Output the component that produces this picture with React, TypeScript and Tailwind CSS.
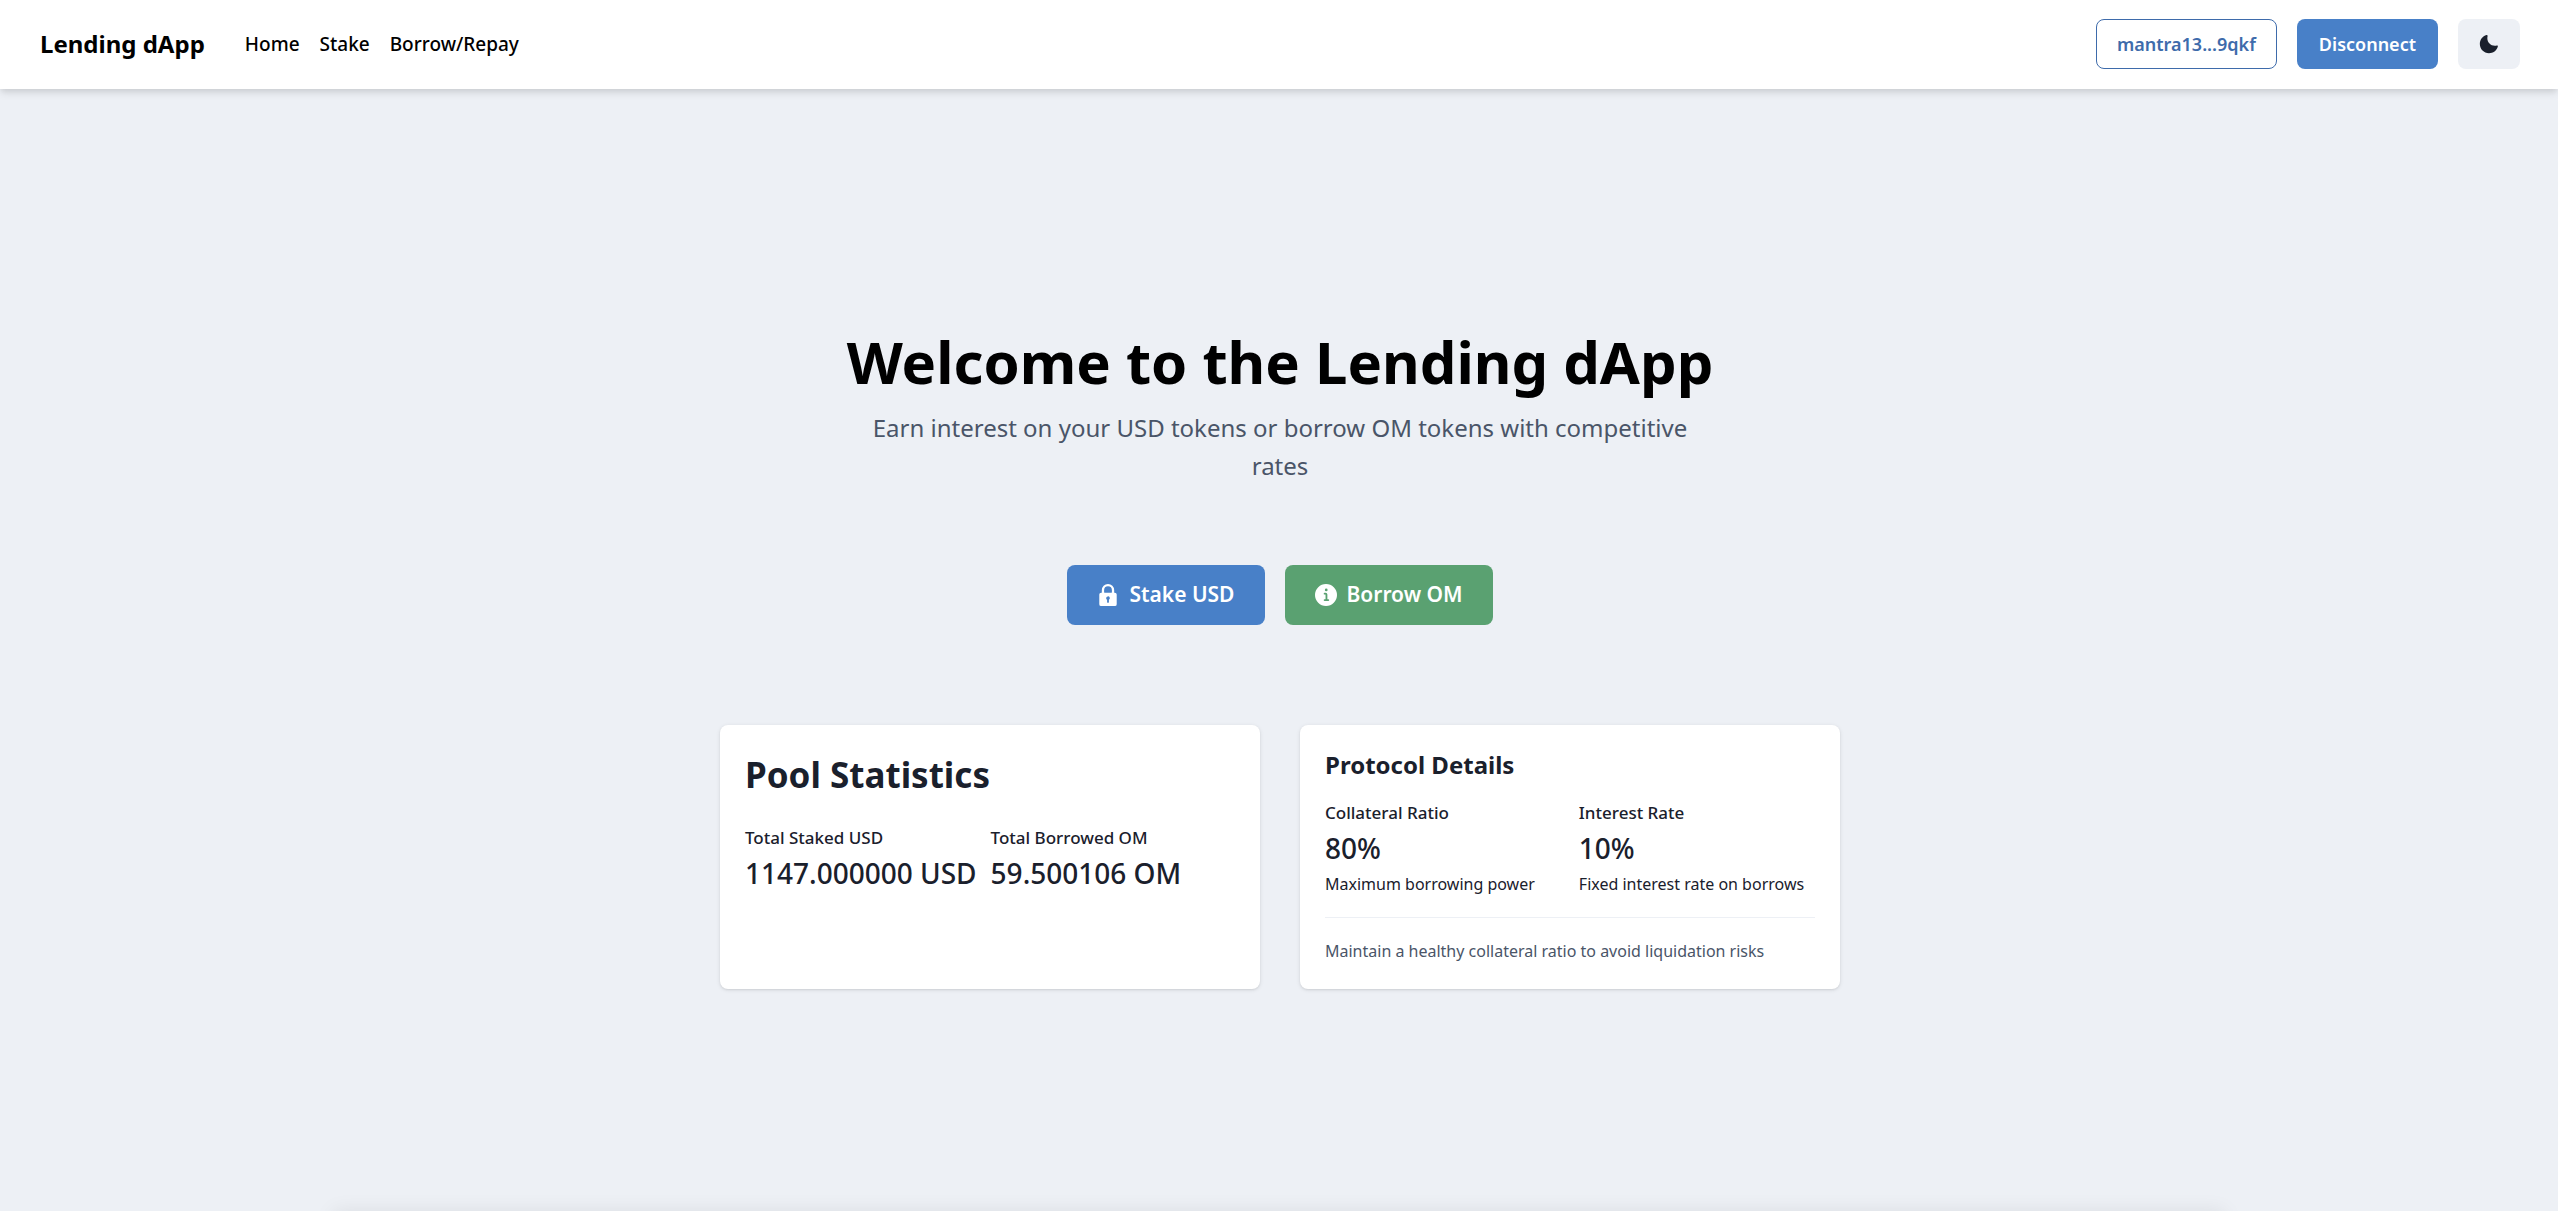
import type { ReactNode } from 'react';

const navLinks = ['Home', 'Stake', 'Borrow/Repay'];

function MoonIcon() {
  return (
    <svg viewBox="0 0 24 24" className="size-5" fill="currentColor" aria-hidden="true">
      <path d="M21.4,13.7C20.6,13.9,19.8,14,19,14c-5,0-9-4-9-9c0-0.8,0.1-1.6,0.3-2.4c0.1-0.3,0-0.7-0.3-1 c-0.3-0.3-0.6-0.4-1-0.3C4.3,2.7,1,7.1,1,12c0,6.1,4.9,11,11,11c4.9,0,9.3-3.3,10.6-8.1c0.1-0.3,0-0.7-0.3-1 C22.1,13.7,21.7,13.6,21.4,13.7z" />
    </svg>
  );
}

function LockIcon() {
  return (
    <svg viewBox="0 0 24 24" className="size-[22px]" fill="currentColor" aria-hidden="true">
      <path d="M19.5,9.5h-.75V6.75a6.75,6.75,0,0,0-13.5,0V9.5H4.5a2,2,0,0,0-2,2V22a2,2,0,0,0,2,2h15a2,2,0,0,0,2-2V11.5A2,2,0,0,0,19.5,9.5Zm-9.5,6a2,2,0,1,1,3,1.723V19.5a1,1,0,0,1-2,0V17.223A1.994,1.994,0,0,1,10,15.5ZM7.75,6.75a4.25,4.25,0,0,1,8.5,0V9a.5.5,0,0,1-.5.5H8.25a.5.5,0,0,1-.5-.5Z" />
    </svg>
  );
}

function InfoIcon() {
  return (
    <svg viewBox="0 0 24 24" className="size-[22px]" fill="currentColor" aria-hidden="true">
      <path d="M12,0A12,12,0,1,0,24,12,12.013,12.013,0,0,0,12,0Zm.25,5a1.5,1.5,0,1,1-1.5,1.5A1.5,1.5,0,0,1,12.25,5ZM14.5,18.5h-4a1,1,0,0,1,0-2h.75a.25.25,0,0,0,.25-.25v-4.5a.25.25,0,0,0-.25-.25H10.5a1,1,0,0,1,0-2h1a2,2,0,0,1,2,2v4.75a.25.25,0,0,0,.25.25h.75a1,1,0,1,1,0,2Z" />
    </svg>
  );
}

function Card({ children }: { children: ReactNode }) {
  return (
    <section className="rounded-lg bg-white p-[25px] text-[#1a202c] shadow-[0_1px_4px_rgba(0,0,0,0.1),0_1px_2px_rgba(0,0,0,0.06)]">
      {children}
    </section>
  );
}

function Stat({ label, value, help }: { label: string; value: string; help?: string }) {
  return (
    <dl className="whitespace-nowrap">
      <dt className="text-[17px] leading-[26px] font-medium">{label}</dt>
      <dd className="text-[28px] leading-[45px] font-medium">{value}</dd>
      {help && <dd className="text-[16px] leading-[26px]">{help}</dd>}
    </dl>
  );
}

export default function App() {
  return (
    <div className="relative flex min-h-screen flex-col overflow-hidden bg-[#edf0f5] font-['Noto_Sans','Segoe_UI',sans-serif] text-black">
      <header className="flex items-center justify-between bg-white pt-[19px] pr-[38px] pb-5 pl-10 shadow-[0_5px_8px_-1px_rgba(0,0,0,0.1),0_3px_5px_-1px_rgba(0,0,0,0.06)]">
        <div className="flex items-center gap-10">
          <h1 className="text-[24px] leading-[38px] font-bold">Lending dApp</h1>
          <nav className="flex gap-5">
            {navLinks.map((label) => (
              <a key={label} href="#" className="text-[19px] leading-[38px] font-medium">
                {label}
              </a>
            ))}
          </nav>
        </div>
        <div className="flex items-center gap-5 text-[18px] leading-6 font-semibold">
          <button className="h-[50px] rounded-lg border border-[#3e6bab] px-5 text-[#3e6bab]">mantra13...9qkf</button>
          <button className="h-[50px] rounded-lg bg-[#4880c8] px-[22px] text-white">Disconnect</button>
          <button aria-label="Toggle color mode" className="flex h-[50px] w-[62px] items-center justify-center rounded-lg bg-[#edf0f5] text-[#1a202c]">
            <MoonIcon />
          </button>
        </div>
      </header>

      <main className="flex flex-1 flex-col items-center justify-center pt-3 pl-0.5">
        <div className="flex w-full max-w-[1120px] flex-col">
          <h2 className="text-center text-[58px] leading-[75px] font-bold">Welcome to the Lending dApp</h2>
          <p className="mx-auto mt-2.5 max-w-[840px] text-center text-[24px] leading-[38px] text-[#4a5568]">
            Earn interest on your USD tokens or borrow OM tokens with competitive rates
          </p>
          <div className="mt-20 flex justify-center gap-5 text-[21px] leading-[27px] font-semibold text-white">
            <button className="flex h-[60px] items-center gap-2.5 rounded-lg bg-[#4880c8] px-[30px]">
              <LockIcon />
              Stake USD
            </button>
            <button className="flex h-[60px] items-center gap-2.5 rounded-lg bg-[#5aa171] px-[30px]">
              <InfoIcon />
              Borrow OM
            </button>
          </div>
          <div className="mt-[100px] grid grid-cols-2 gap-10">
            <Card>
              <h3 className="text-[35px] leading-[50px] font-bold">Pool Statistics</h3>
              <div className="mt-[25px] flex gap-3.5">
                <Stat label="Total Staked USD" value="1147.000000 USD" />
                <Stat label="Total Borrowed OM" value="59.500106 OM" />
              </div>
            </Card>
            <Card>
              <h3 className="text-[24px] leading-[30px] font-bold">Protocol Details</h3>
              <div className="mt-5 flex gap-11">
                <Stat label="Collateral Ratio" value="80%" help="Maximum borrowing power" />
                <Stat label="Interest Rate" value="10%" help="Fixed interest rate on borrows" />
              </div>
              <hr className="my-5 border-[#edf0f5]" />
              <p className="text-[16px] leading-[26px] text-[#4a5568]">
                Maintain a healthy collateral ratio to avoid liquidation risks
              </p>
            </Card>
          </div>
        </div>
      </main>
      <div
        aria-hidden="true"
        className="pointer-events-none absolute inset-x-[13%] top-full h-10 shadow-[0_0_20px_rgba(0,0,0,0.08)]"
      />
    </div>
  );
}
